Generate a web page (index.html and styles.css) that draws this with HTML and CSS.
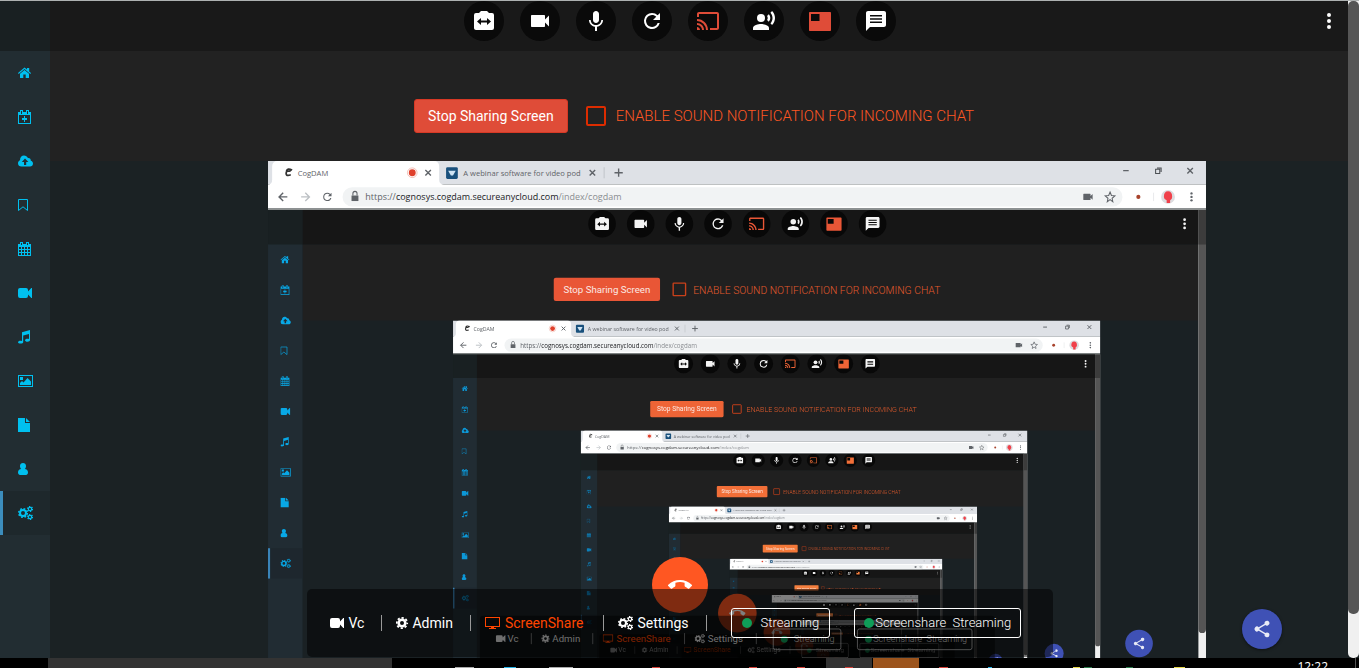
FILE: index.html
```html
<!DOCTYPE html>
<html lang="en">
<head>
<meta charset="utf-8">
<title>CogDAM</title>
<link rel="stylesheet" href="styles.css">
</head>
<body>
<svg class="sprite" aria-hidden="true">
  <symbol id="i-home" viewBox="0 0 16 14"><path d="M0 7L6.5 1.5 9 3.6V2h2.2v3.5L13 7l-.7.9L6.5 3 .7 7.900z"/><path d="M2 7.700L6.500 4 11 7.700V12H7.700V8.500H5.300V12H2z"/></symbol>
  <symbol id="i-calplus" viewBox="0 0 16 14"><path fill-rule="evenodd" d="M0 2h2V0h3v2h3V0h3v2h2v12H0zM1 5v8h11V5zM3 1v3h1V1zM9 1v3h1V1z"/><path d="M6 6h1v2h2v2H7v2H6v-2H4V8h2z"/></symbol>
  <symbol id="i-cloud" viewBox="0 0 16 14"><path fill-rule="evenodd" d="M3.500 12.500A3.500 3.500 0 0 1 0 9.200C0 7.800.8 6.700 2 6.200 2 3.500 3.700 1.500 6 1.500c1.800 0 3.200 1 3.900 2.500C11.600 3.600 13 5 12.800 6.700 14 7 15 8.100 15 9.500c0 1.700-1.300 3-3 3zM7 4.500L3.800 8H6v3h2.200V8h2.200z"/></symbol>
  <symbol id="i-bookmark" viewBox="0 0 16 14"><path fill="none" stroke="currentColor" d="M.5 1.500h9v11L5 8.800.5 12.500z"/></symbol>
  <symbol id="i-calendar" viewBox="0 0 16 14"><path fill-rule="evenodd" d="M0 2h2V0h3v2h3V0h3v2h2v12H0zM3 1v2h1V1zM9 1v2h1V1zM1 5v2h2V5zM4 5v2h2V5zM7 5v2h2V5zM10 5v2h2V5zM1 8v2h2V8zM4 8v2h2V8zM7 8v2h2V8zM10 8v2h2V8zM1 11v2h2v-2zM4 11v2h2v-2zM7 11v2h2v-2zM10 11v2h2v-2z"/></symbol>
  <symbol id="i-video" viewBox="0 0 16 14"><path d="M2 2h6a2 2 0 0 1 2 2v1.500L13.300 2H14v10h-.7L10 8.500V10a2 2 0 0 1-2 2H2a2 2 0 0 1-2-2V4a2 2 0 0 1 2-2z"/></symbol>
  <symbol id="i-music" viewBox="0 0 16 14"><path d="M4 2.200L12 0v10c0 1-1 1.700-2.500 1.700S7 11 7 10.200s1-1.500 2.500-1.500c.6 0 1 .1 1.500.3V4L5.200 5.600V12c0 1-1.100 1.600-2.600 1.600S0 13 0 12.200s1-1.500 2.500-1.500c.6 0 1 .1 1.500.3z"/></symbol>
  <symbol id="i-image" viewBox="0 0 16 14"><path fill-rule="evenodd" d="M0 1h15v12H0zM1 2v10h13V2z"/><path d="M2 3h3v3H2zM2 11V9l2-2 1.500 1.500L9.500 4 13 7.500V11z"/></symbol>
  <symbol id="i-file" viewBox="0 0 16 14"><path d="M0 0h7v5h5v9H0z"/><path d="M8 0l4 4H8z"/></symbol>
  <symbol id="i-user" viewBox="0 0 16 14"><path d="M5 1c1.800 0 3 1.200 3 3 0 1.200-.5 2.300-1.200 3C8.700 7 10 8.300 10 10.500 10 12 9 13 8 13H2c-1 0-2-1-2-2.500C0 8.300 1.300 7 3.200 7 2.500 6.300 2 5.200 2 4c0-1.800 1.200-3 3-3z"/></symbol>
  <symbol id="i-cogs" viewBox="0 0 16 14"><g fill="none" stroke="currentColor"><circle cx="5" cy="7" r="3" stroke-width="2"/><circle cx="5" cy="7" r="4.300" stroke-width="1.600" stroke-dasharray="1.700 1.677"/><circle cx="12" cy="3" r="1.700" stroke-width="1.200"/><circle cx="12" cy="3" r="2.500" stroke-width="1.200" stroke-dasharray="1.300 1.318"/><circle cx="12" cy="11" r="1.700" stroke-width="1.200"/><circle cx="12" cy="11" r="2.500" stroke-width="1.200" stroke-dasharray="1.300 1.318"/></g></symbol>
  <symbol id="i-cog" viewBox="0 0 16 14"><g fill="none" stroke="currentColor"><circle cx="6" cy="7" r="3.300" stroke-width="2.600"/><circle cx="6" cy="7" r="5.200" stroke-width="1.800" stroke-dasharray="2.200 1.884" stroke-dashoffset="1.100"/></g></symbol>
  <symbol id="i-monitor" viewBox="0 0 16 14"><path fill-rule="evenodd" d="M0 1h15v10H9v1h2v1H4v-1h2v-1H0zM1 2v8h13V2z"/></symbol>

  <symbol id="m-switch" viewBox="0 0 24 24"><path fill-rule="evenodd" d="M20 4h-3l-2-2H9L7 4H4a2 2 0 0 0-2 2v13c0 1.100.9 2 2 2h16a2 2 0 0 0 2-2V6a2 2 0 0 0-2-2zM9 9v2.500h6V9l4 3.500-4 3.500v-2.500H9V16l-4-3.500z"/></symbol>
  <symbol id="m-videocam" viewBox="0 0 24 24"><path d="M17 10.500V7c0-.6-.4-1-1-1H4c-.6 0-1 .4-1 1v10c0 .6.400 1 1 1h12c.6 0 1-.4 1-1v-3.500l4 4v-11z"/></symbol>
  <symbol id="m-mic" viewBox="0 0 24 24"><path d="M12 14c1.660 0 3-1.340 3-3V5c0-1.660-1.340-3-3-3S9 3.340 9 5v6c0 1.660 1.340 3 3 3zm5.300-3c0 3-2.540 5.100-5.300 5.100S6.700 14 6.700 11H5c0 3.410 2.720 6.230 6 6.720V22h2v-4.280c3.280-.48 6-3.300 6-6.720z"/></symbol>
  <symbol id="m-refresh" viewBox="0 0 24 24"><path d="M17.650 6.350A7.960 7.960 0 0 0 12 4a8 8 0 1 0 7.730 10h-2.080A6 6 0 1 1 12 6c1.660 0 3.140.69 4.220 1.780L13 11h7V4z"/></symbol>
  <symbol id="m-cast" viewBox="0 0 24 24"><path d="M21 3H3c-1.100 0-2 .9-2 2v3h2V5h18v14h-7v2h7c1.100 0 2-.9 2-2V5c0-1.100-.9-2-2-2zM1 18v3h3c0-1.660-1.340-3-3-3zm0-4v2c2.760 0 5 2.240 5 5h2c0-3.870-3.130-7-7-7zm0-4v2a9 9 0 0 1 9 9h2c0-6.080-4.930-11-11-11z"/></symbol>
  <symbol id="m-voice" viewBox="0 0 24 24"><circle cx="9" cy="9" r="4"/><path d="M9 15c-2.670 0-8 1.340-8 4v2h16v-2c0-2.660-5.330-4-8-4zm7.760-9.640l-1.680 1.690c.84 1.180.84 2.710 0 3.890l1.680 1.690c2.020-2.020 2.020-5.070 0-7.270zM20.070 2l-1.630 1.630c2.770 3.020 2.770 7.560 0 10.740L20.070 16c3.900-3.890 3.910-9.950 0-14z"/></symbol>
  <symbol id="m-featured" viewBox="0 0 24 24"><path fill-rule="evenodd" d="M22 3H2c-.6 0-1 .4-1 1v17c0 .6.400 1 1 1h20c.6 0 1-.4 1-1V4c0-.6-.4-1-1-1zM11.500 12H3V5h8.500z"/></symbol>
  <symbol id="m-chat" viewBox="0 0 24 24"><path fill-rule="evenodd" d="M20 2H4c-1.100 0-2 .9-2 2v18l4-4h14c1.100 0 2-.9 2-2V4c0-1.100-.9-2-2-2zM6 6h12v1.500H6zM6 9.300h12v1.500H6zM6 12.600h12v1.500H6z"/></symbol>
  <symbol id="m-more" viewBox="0 0 24 24"><path d="M12 8a2 2 0 1 0 0-4 2 2 0 0 0 0 4zm0 2a2 2 0 1 0 0 4 2 2 0 0 0 0-4zm0 6a2 2 0 1 0 0 4 2 2 0 0 0 0-4z"/></symbol>
  <symbol id="m-callend" viewBox="0 0 24 24"><path d="M12 9c-1.600 0-3.150.25-4.600.72v3.100c0 .39-.23.74-.56.900-.98.490-1.870 1.120-2.660 1.850-.18.180-.43.280-.7.280-.28 0-.53-.11-.71-.29L.29 13.080a1 1 0 0 1 0-1.410C3.340 8.780 7.460 7 12 7s8.660 1.780 11.710 4.670a1 1 0 0 1 0 1.410l-2.480 2.480c-.18.180-.43.290-.71.290-.27 0-.52-.11-.7-.28a11.300 11.300 0 0 0-2.670-1.850.99.99 0 0 1-.56-.9v-3.100A15 15 0 0 0 12 9z"/></symbol>
  <symbol id="m-share" viewBox="0 0 24 24"><path d="M18 16.080c-.76 0-1.440.3-1.960.77L8.910 12.700c.05-.23.090-.46.090-.7s-.04-.47-.09-.7l7.050-4.110A3 3 0 1 0 15 5c0 .24.040.47.090.7L8.040 9.810A3 3 0 1 0 8.040 14.190l7.120 4.160a2.920 2.920 0 1 0 2.840-2.270z"/></symbol>
</svg>

<div class="page">
  <header class="topbar">
    <div class="topbar-logo"></div>
    <div class="tools">
      <button class="tool" aria-label="Switch camera"><svg><use href="#m-switch"/></svg></button>
      <button class="tool" aria-label="Camera"><svg><use href="#m-videocam"/></svg></button>
      <button class="tool" aria-label="Microphone"><svg><use href="#m-mic"/></svg></button>
      <button class="tool" aria-label="Refresh"><svg><use href="#m-refresh"/></svg></button>
      <button class="tool tool-on" aria-label="Cast"><svg><use href="#m-cast"/></svg></button>
      <button class="tool" aria-label="Voice"><svg><use href="#m-voice"/></svg></button>
      <button class="tool tool-on" aria-label="Featured video"><svg><use href="#m-featured"/></svg></button>
      <button class="tool" aria-label="Chat"><svg><use href="#m-chat"/></svg></button>
    </div>
    <button class="more" aria-label="More"><svg><use href="#m-more"/></svg></button>
  </header>

  <div class="body">
    <nav class="side">
      <a href="#" aria-label="Home"><svg><use href="#i-home"/></svg></a>
      <a href="#" aria-label="New event"><svg><use href="#i-calplus"/></svg></a>
      <a href="#" aria-label="Upload"><svg><use href="#i-cloud"/></svg></a>
      <a href="#" aria-label="Bookmarks"><svg><use href="#i-bookmark"/></svg></a>
      <a href="#" aria-label="Calendar"><svg><use href="#i-calendar"/></svg></a>
      <a href="#" aria-label="Videos"><svg><use href="#i-video"/></svg></a>
      <a href="#" aria-label="Music"><svg><use href="#i-music"/></svg></a>
      <a href="#" aria-label="Images"><svg><use href="#i-image"/></svg></a>
      <a href="#" aria-label="Files"><svg><use href="#i-file"/></svg></a>
      <a href="#" aria-label="User"><svg><use href="#i-user"/></svg></a>
      <a href="#" aria-label="Settings" class="active"><svg><use href="#i-cogs"/></svg></a>
    </nav>
    <main class="main">
      <div class="notice">
        <button class="stop">Stop Sharing Screen</button>
        <label class="sound"><input type="checkbox">ENABLE SOUND NOTIFICATION FOR INCOMING CHAT</label>
      </div>
      <div class="stage">
        <svg class="share-view" id="share" viewBox="0 0 1359 768"></svg>
      </div>
    </main>
  </div>

  <button class="hangup" aria-label="End call"><svg><use href="#m-callend"/></svg></button>
  <div class="dock">
    <a href="#" class="dock-item"><svg><use href="#i-video"/></svg>Vc</a>
    <a href="#" class="dock-item dock-tight"><svg><use href="#i-cog"/></svg>Admin</a>
    <a href="#" class="dock-item dock-on"><svg><use href="#i-monitor"/></svg>ScreenShare</a>
    <a href="#" class="dock-item"><svg><use href="#i-cogs"/></svg>Settings</a>
    <button class="stream stream-wide"><i></i>Streaming</button>
    <button class="stream"><i></i>Screenshare&nbsp; Streaming</button>
  </div>
  <button class="share-btn" aria-label="Share"><svg><use href="#m-share"/></svg></button>
  <div class="scroll"><div class="thumb"></div></div>
</div>

<div class="taskbar">
  <svg viewBox="0 0 1359 10" preserveAspectRatio="xMinYMin slice" aria-hidden="true">
    <path fill="#333" d="M48 0h344v10H48zM826 0h46v10h-46z"/>
    <path fill="#9c541c" d="M873 0h46v10h-46z"/>
    <path fill="#aaa" d="M455 9h19v1h-19zM549 9h24v1h-24z"/>
    <path fill="#2ab4e8" d="M504 9h12v1h-12zM988 9h4v1h-4z"/>
    <path fill="#d8453c" d="M652 9h8v1h-8zM749 9h8v1h-8zM797 9h8v1h-8zM845 9h8v1h-8zM939 9h9v1h-9z"/>
    <path fill="#e8d84c" d="M1073 9h7v1h-7zM1174 9h11v1h-11z"/>
    <path fill="#2c7c4c" d="M1084 9h8v1h-8zM1126 9h7v1h-7z"/>
    <path fill="#555" d="M1355 0h1v10h-1z"/>
  </svg>
  <span class="clock">12:22</span>
</div>
<script src="share.js"></script>
</body>
</html>
```

FILE: styles.css
```css
* { box-sizing: border-box; }
body { margin: 0; height: 100vh; display: flex; flex-direction: column; overflow: hidden; background: #000; color: #fff; font: 14px/20px Roboto, "Liberation Sans", sans-serif; }
button { border: 0; padding: 0; font: inherit; color: inherit; background: none; cursor: pointer; }
a { color: inherit; text-decoration: none; }
svg { fill: currentColor; display: block; }
.sprite { position: absolute; width: 0; height: 0; }

.page { position: relative; flex: 1; min-height: 0; display: flex; flex-direction: column; border-top: 1px solid #adb1b1; background: #1b2224; overflow: hidden; }
.topbar { display: grid; grid-template-columns: 50px 1fr 50px; height: 50px; flex: none; background: #191919; }
.topbar-logo { background: #192022; }
.tools { display: flex; justify-content: center; gap: 16px; }
.tool { width: 40px; height: 40px; border-radius: 50%; background: #0a0a0a; display: grid; place-items: center; }
.tool svg, .more svg { width: 24px; height: 24px; }
.tool-on { color: #df4c38; }
.more { height: 40px; padding-right: 11px; display: grid; place-items: center; }

.body { display: flex; flex: 1; min-height: 0; }
.side { width: 50px; flex: none; background: #222d32; color: #00c0ef; }
.side a { display: flex; align-items: center; height: 44px; padding-left: 15px; border-left: 3px solid transparent; }
.side svg { width: 16px; height: 14px; }
.side .active { background: #1e282c; border-left-color: #3c8dbc; }
.main { flex: 1; min-width: 0; display: flex; flex-direction: column; padding-right: 11px; }
.notice { height: 110px; flex: none; display: flex; align-items: center; justify-content: center; gap: 18px; padding: 20px 10px 0 0; background: #222; }
.stop { height: 34px; padding: 0 13px; border: 1px solid #d73925; border-radius: 3px; background: #df4c38; }
.sound { display: flex; align-items: center; gap: 10px; color: #ff5722; font-size: 15px; font-weight: 300; }
.sound input { appearance: none; width: 20px; height: 20px; margin: 0; border: 2px solid #dd2c00; border-radius: 2px; }
.stage { flex: 1; min-height: 0; overflow: hidden; display: flex; align-items: flex-start; justify-content: center; padding-left: 76px; }
.share-view { flex: 0 1 938px; min-width: 0; aspect-ratio: 1359 / 768; }

.share-view text { font-family: Roboto, "Liberation Sans", sans-serif; font-size: 14px; }
.share-view .chrome-text { font-family: "Open Sans", "Noto Sans", sans-serif; font-size: 11px; fill: #5f6368; }
.share-view .url { font-size: 13px; }
.share-view .host { fill: #202124; }
.share-view .path { fill: #8a8d91; }
.share-view .sound-text { font-size: 15px; font-weight: 300; }
.share-view .stream-text { font-size: 13px; font-weight: 300; }
.share-view .soft { filter: blur(1px); }

.hangup { position: absolute; left: 50%; bottom: 45px; width: 56px; height: 56px; margin-left: -28px; border-radius: 50%; background: #ff5722; display: grid; place-items: center; }
.hangup svg { width: 24px; height: 24px; }
.dock { position: absolute; left: 50%; bottom: 1px; transform: translateX(-50%); width: 746px; height: 68px; padding-left: 23px; display: flex; align-items: center; border-radius: 5px; background: rgba(0, 0, 0, .5); white-space: nowrap; }
.dock-item { display: flex; align-items: center; height: 16px; padding-right: 17px; margin-right: 14px; border-right: 1px solid #999; gap: 3px; }
.dock-item svg { width: 16px; height: 14px; }
.dock-tight { gap: 0; }
.dock-on { color: #ff4500; gap: 4px; padding-right: 20px; }
.stream { display: flex; align-items: center; gap: 1px; height: 30px; padding: 0 9px; margin: 0 14px 0 10px; border: 1px solid #fff; border-radius: 3px; font-size: 13px; font-weight: 300; }
.stream i { width: 10px; height: 10px; border-radius: 50%; background: #0f9d58; }
.stream-wide { gap: 9px; padding: 0 10px; }
.share-btn { position: absolute; right: 77px; bottom: 9px; width: 40px; height: 40px; border-radius: 50%; background: #3f51b5; color: #e8eaf6; display: grid; place-items: center; box-shadow: 0 1px 3px rgba(0, 0, 0, .5); }
.share-btn svg { width: 20px; height: 20px; }
.scroll { position: absolute; top: 0; right: 0; bottom: 0; width: 11px; background: #f0f0f0; border-radius: 0 0 5px 5px; }
.thumb { height: 613px; max-height: 94%; background: #555; border-radius: 5px; }

.taskbar { position: relative; height: 10px; flex: none; overflow: hidden; background: #000; }
.taskbar svg { width: 1359px; height: 10px; }
.clock { position: absolute; right: 31px; top: 1px; font: 12px/16px "Open Sans", sans-serif; }
```

FILE: share.js
```js
// The shared desktop shows this same page, so each level draws the next one inside it.
const DEPTH = 7;
const BUTTON = ['#e95636', '#ee6436', '#f26f38', '#f47838', '#f57f3e', '#f58442', '#f58442'];
const ACCENT = ['#08a8e6', '#0c98d8', '#0d80ba', '#0c6c9e', '#0b5c88', '#0b5c88', '#0b5c88'];
const NAV = ['home', 'calplus', 'cloud', 'bookmark', 'calendar', 'video', 'music', 'image', 'file', 'user', 'cogs'];
const TOOLS = ['switch', 'videocam', 'mic', 'refresh', 'cast', 'voice', 'featured', 'chat'];

const icon = (id, x, y, w, h, color) =>
  `<g color="${color}" fill="${color}"><use href="#${id}" x="${x}" y="${y}" width="${w}" height="${h}"/></g>`;

function chrome() {
  return `<path fill="#dee1e6" d="M0 0h1359v34H0z"/><path fill="#fff" d="M0 34q6 0 6-7V8q0-8 8-8h226q8 0 8 8v19q0 7 7 7h1104v35H0z"/>
  <path fill="none" stroke="#333" stroke-width="2.500" d="M35 13q-7-3-8 1 5 2 6-1M27 15q-3 8 6 5"/>
  <text class="chrome-text" x="43" y="22">CogDAM</text>
  <circle cx="209" cy="17" r="5" fill="#e0402c"/><circle cx="209" cy="17" r="7" fill="none" stroke="#eda79c"/>
  <path stroke="#5f6368" stroke-width="2" fill="none" d="M228 13l8 8m0-8l-8 8M466 13l8 8m0-8l-8 8M508 11v12m-6-6h12M1239 14h8M1332 10l8 8m0-8l-8 8"/>
  <path stroke="#b4b8bd" d="M487 9v16"/>
  <path stroke="#4c5054" fill="none" stroke-width="1.500" d="M1286 12h6v6h-6zM1288 10h6v6"/>
  <rect x="258" y="9" width="17" height="17" rx="2" fill="#19507c"/><path fill="#cfe4f4" d="M261 14h11l-4 7h-3z"/>
  <text class="chrome-text" x="283" y="22">A webinar software for video pod</text>
  <path stroke="#5f6368" stroke-width="2" fill="none" d="M28 52H16m6-6l-6 6 6 6"/><path stroke="#bcc0c4" stroke-width="2" fill="none" d="M48 52h12m-6-6l6 6-6 6"/>
  ${icon('m-refresh', 77, 43, 18, 18, '#5f6368')}
  <rect x="108" y="38" width="1130" height="28" rx="14" fill="#f1f3f4"/>
  <path fill="#5f6368" d="M121 50h10v8h-10z"/><path fill="none" stroke="#5f6368" stroke-width="1.500" d="M123 50v-3a3 3 0 0 1 6 0v3"/>
  <text class="chrome-text url" x="141" y="57">https://<tspan class="host">cognosys.cogdam.secureanycloud.com</tspan><tspan class="path">/index/cogdam</tspan></text>
  ${icon('m-videocam', 1179, 43, 18, 18, '#5f6368')}
  <path fill="none" stroke="#5f6368" stroke-width="1.500" d="M1220 45l2 5 5 .5-4 3.500 1 5-4-3-4 3 1-5-4-3.500 5-.5z"/>
  <circle cx="1261" cy="52" r="3" fill="#a8432c"/><path stroke="#dfe1e4" d="M1283 46v12"/>
  <circle cx="1304" cy="52" r="10" fill="#dcdcdf"/><path fill="#f0404a" d="M1298 52q0-8 6-8t6 8q0 3-3 5v4h-5v-4q-4-2-4-5z"/>
  <g fill="#5f6368"><circle cx="1338" cy="47" r="1.700"/><circle cx="1338" cy="52" r="1.700"/><circle cx="1338" cy="57" r="1.700"/></g>
  <path fill="#8d9191" d="M0 69h1359v2H0z"/>`;
}

function page(level) {
  const hot = BUTTON[level], blue = ACCENT[level];
  let s = `<path fill="#1a2124" d="M0 70h1359v698H0z"/><path fill="#202020" d="M50 120h1298v110H50z"/>
  <path fill="#161616" d="M50 70h1298v50H50z"/><path fill="#192022" d="M0 70h50v50H0z"/>
  <path fill="#212c33" d="M0 120h50v648H0z"/><path fill="#1e272e" d="M0 560h50v44H0z"/><path fill="#3a84b8" d="M0 560h3v44H0z"/>`;
  NAV.forEach((n, i) => { s += icon('i-' + n, 18, 135 + i * 44, 16, 14, blue); });
  TOOLS.forEach((n, i) => {
    const x = 484 + i * 56, on = n === 'cast' || n === 'featured';
    s += `<circle cx="${x}" cy="90" r="20" fill="#080808"/>` + icon('m-' + n, x - 12, 78, 24, 24, on ? hot : '#f4f4f4');
  });
  s += icon('m-more', 1316, 78, 24, 24, '#f4f4f4');
  s += `<rect x="414" y="168" width="154" height="34" rx="3" fill="${hot}"/>
  <text x="491" y="190" text-anchor="middle" fill="#fbe9e4">Stop Sharing Screen</text>
  <rect x="587" y="176" width="18" height="18" rx="1" fill="none" stroke="#c8401a" stroke-width="2"/>
  <text class="sound-text" x="616" y="191" fill="#e05a2c">ENABLE SOUND NOTIFICATION FOR INCOMING CHAT</text>`;
  if (level + 1 < DEPTH) s += `<g${level === 0 ? ' class="soft"' : ''}><svg x="268" y="230" width="938" height="530" viewBox="0 0 1359 768">${desktop(level + 1)}</svg></g>`;
  s += `<circle cx="680" cy="654" r="28" fill="#ff5722"/>${icon('m-callend', 668, 642, 24, 24, '#fff')}
  <rect x="307" y="658" width="746" height="68" rx="5" fill="#000" fill-opacity=".5"/>`;
  if (level < 2) {
    s += icon('i-video', 330, 684, 16, 14, '#ddd') + `<text x="347" y="696" fill="#ddd">Vc</text>` +
      icon('i-cog', 396, 684, 16, 14, '#ddd') + `<text x="412" y="696" fill="#ddd">Admin</text>` +
      icon('i-monitor', 485, 684, 16, 14, '#ff4500') + `<text x="505" y="696" fill="#ff4500">ScreenShare</text>` +
      icon('i-cogs', 618, 684, 16, 14, '#ddd') + `<text x="637" y="696" fill="#ddd">Settings</text>
    <path stroke="#999" d="M381.500 683v16M470.500 683v16M603.500 683v16M707.500 683v16"/>
    <g fill="none" stroke="#ddd"><rect x="732" y="677" width="98" height="30" rx="3"/><rect x="854" y="677" width="166" height="30" rx="3"/></g>
    <g fill="#0f9d58"><circle cx="748" cy="692" r="5"/><circle cx="870" cy="692" r="5"/></g>
    <text class="stream-text" x="762" y="696" fill="#ddd">Streaming</text><text class="stream-text" x="877" y="696" fill="#ddd">Screenshare&#160; Streaming</text>`;
  }
  s += `<circle cx="1262" cy="698" r="20" fill="#3f51b5"/>${icon('m-share', 1252, 688, 20, 20, '#e8eaf6')}
  <path fill="#f0f0f0" d="M1348 70h11v657h-11z"/><path fill="#555" d="M1348 70h11v607q0 6-5.500 6t-5.500-6z"/><path fill="#3c3c3c" d="M1348 70h11v50h-11z"/>`;
  return `<g transform="translate(0 1)">${s}</g>`;
}

function desktop(level) { return page(level) + chrome(); }

document.getElementById('share').innerHTML = desktop(0);
```
